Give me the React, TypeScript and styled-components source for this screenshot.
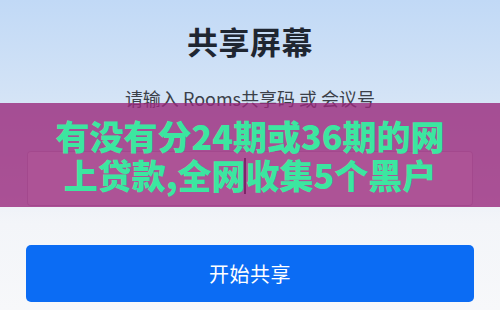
import React from "react";
import styled, { createGlobalStyle } from "styled-components";

const GlobalStyle = createGlobalStyle`
  html, body {
    margin: 0;
    padding: 0;
  }
  body {
    width: 500px;
    height: 310px;
    overflow: hidden;
    font-family: "Noto Sans CJK SC", "Noto Sans", sans-serif;
  }
`;

const Screen = styled.div`
  position: relative;
  width: 500px;
  height: 310px;
  display: flex;
  flex-direction: column;
  align-items: center;
  background: linear-gradient(
    to bottom,
    #c1d9f6 0%,
    #d3e3f6 30%,
    #e6edf6 55%,
    #f3f5f9 72%,
    #f7f8fa 100%
  );
`;

const Title = styled.h1`
  margin: 21px 0 0;
  font-size: 31px;
  line-height: 40px;
  font-weight: 700;
  color: #1f2631;
  letter-spacing: 0.5px;
`;

const Hint = styled.p`
  margin: 25px 0 0;
  font-size: 18px;
  line-height: 24px;
  color: #3b4049;
`;

const CodeInput = styled.div`
  margin-top: 41px;
  width: 446px;
  height: 55px;
  box-sizing: border-box;
  border: 1px solid rgba(60, 40, 80, 0.25);
  border-radius: 4px;
  background: #ffffff;
  display: flex;
  justify-content: center;
  padding-top: 6px;
`;

const Caret = styled.span`
  display: block;
  width: 2px;
  height: 36px;
  margin-right: 10px;
  background: #1a1420;
`;

const StartButton = styled.button`
  margin-top: 39px;
  width: 448px;
  height: 57px;
  border: none;
  border-radius: 5px;
  background: #0b6cf4;
  color: #ffffff;
  font-family: "Noto Sans CJK SC", sans-serif;
  font-size: 20px;
  letter-spacing: 0.5px;
`;

const Banner = styled.div`
  position: absolute;
  left: 0;
  right: 0;
  top: 103px;
  height: 104px;
  background: rgba(153, 40, 124, 0.8);
  display: flex;
  flex-direction: column;
  align-items: center;
  justify-content: center;
  box-sizing: border-box;
`;

const BannerLine = styled.div`
  color: #3ce6a0;
  font-size: 34px;
  line-height: 39px;
  font-weight: 900;
  white-space: nowrap;
`;

export default function App() {
  return (
    <>
      <GlobalStyle />
      <Screen>
        <Title>共享屏幕</Title>
        <Hint>请输入 Rooms共享码 或 会议号</Hint>
        <CodeInput>
          <Caret />
        </CodeInput>
        <StartButton>开始共享</StartButton>
        <Banner>
          <BannerLine>有没有分24期或36期的网</BannerLine>
          <BannerLine>上贷款,全网收集5个黑户</BannerLine>
        </Banner>
      </Screen>
    </>
  );
}
